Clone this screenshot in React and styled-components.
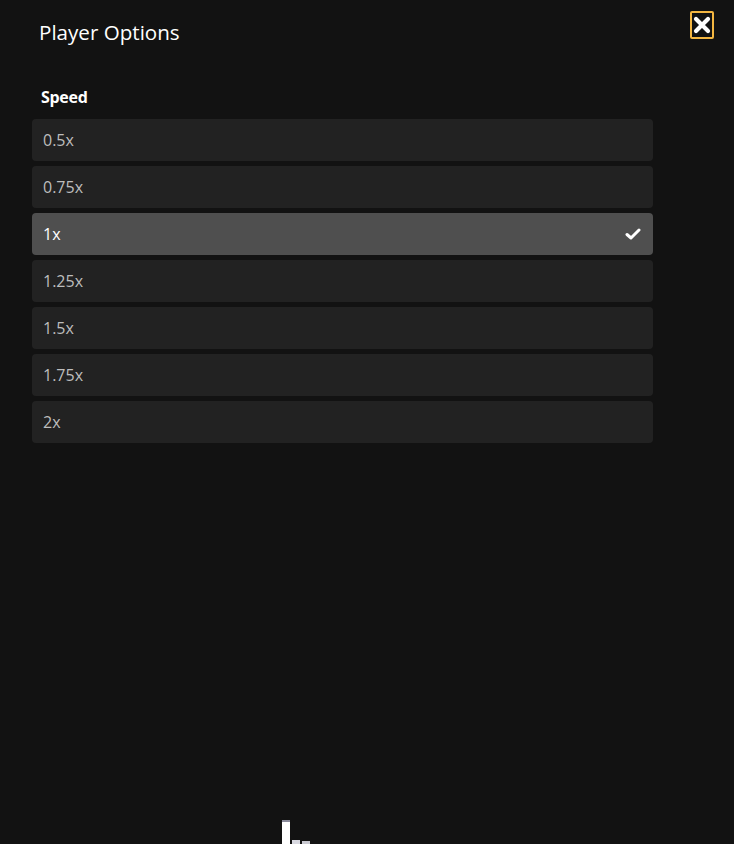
import styled, { createGlobalStyle } from 'styled-components';

const speeds = ['0.5x', '0.75x', '1x', '1.25x', '1.5x', '1.75x', '2x'];

export default function App() {
  return (
    <>
      <GlobalStyle />
      <Page>
        <Header>
          <Title>Player Options</Title>
          <CloseButton aria-label='Close'>
            <svg width='18' height='18' viewBox='0 0 18 18'>
              <path
                d='M3 3 L15 15 M15 3 L3 15'
                stroke='#fff'
                strokeWidth='4.2'
                strokeLinecap='round'
              />
            </svg>
          </CloseButton>
        </Header>

        <Section>
          <SectionLabel>Speed</SectionLabel>
          <OptionList>
            {speeds.map((s) => (
              <Option key={s} selected={s === '1x'}>
                <span>{s}</span>
                {s === '1x' && (
                  <svg width='16' height='12' viewBox='0 0 16 12'>
                    <path
                      d='M2 6.5 L6 10 L14 2'
                      fill='none'
                      stroke='#fff'
                      strokeWidth='3'
                      strokeLinecap='round'
                      strokeLinejoin='round'
                    />
                  </svg>
                )}
              </Option>
            ))}
          </OptionList>
        </Section>

        <Footer>
          <svg width='30' height='24' viewBox='0 0 30 24'>
            <rect x='0' y='0' width='8' height='24' fill='#fff' />
            <rect x='0' y='0' width='8' height='2' fill='#8a8a9a' />
            <rect x='10' y='20' width='8' height='4' fill='#d8d8e0' />
            <rect x='20' y='21' width='8' height='3' fill='#c8c8d0' />
          </svg>
        </Footer>
      </Page>
    </>
  );
}

/**
 * STYLED COMPONENTS
 */
const GlobalStyle = createGlobalStyle`
  html, body {
    margin: 0;
    padding: 0;
    background: #121212;
    font-family: 'Open Sans', 'Noto Sans', sans-serif;
  }
`;

const Page = styled.div`
  height: 844px;
  width: 734px;
  box-sizing: border-box;
  padding: 0 81px 0 32px;
  display: flex;
  flex-direction: column;
  overflow: hidden;
`;

const Header = styled.div`
  display: flex;
  justify-content: space-between;
  align-items: flex-start;
  padding: 11px 0 0 7px;
  margin-right: -61px;
`;

const Title = styled.h2`
  margin: 8px 0 0;
  font-size: 20.6px;
  font-weight: 400;
  color: #fff;
  line-height: 27px;
`;

const CloseButton = styled.button`
  width: 24px;
  height: 28px;
  padding: 0;
  border: 2px solid #f3b641;
  border-radius: 2px;
  background: transparent;
  display: flex;
  align-items: center;
  justify-content: center;
`;

const Section = styled.div`
  margin-top: 40px;
`;

const SectionLabel = styled.div`
  padding-left: 9px;
  font-size: 16px;
  font-weight: 700;
  color: #fff;
  line-height: 22px;
  margin-bottom: 11px;
  letter-spacing: -0.3px;
`;

const OptionList = styled.div`
  display: flex;
  flex-direction: column;
  gap: 5px;
`;

const Option = styled.div`
  height: 42px;
  box-sizing: border-box;
  padding: 0 12px 0 11px;
  border-radius: 4px;
  background: ${({ selected }) => (selected ? '#4f4f4f' : '#222222')};
  color: ${({ selected }) => (selected ? '#fff' : '#bdbdbd')};
  font-size: 16px;
  display: flex;
  align-items: center;
  justify-content: space-between;
`;

const Footer = styled.div`
  margin-top: auto;
  padding-left: 250px;
  height: 24px;
  line-height: 0;
`;
